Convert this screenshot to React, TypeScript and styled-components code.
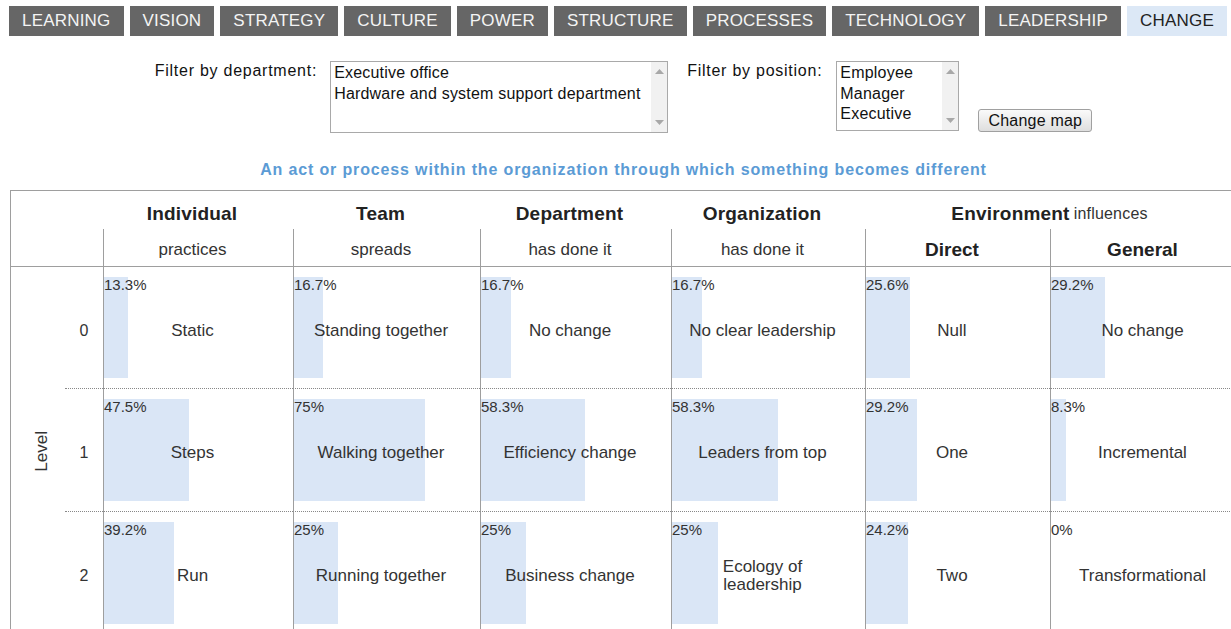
import styled, { createGlobalStyle } from 'styled-components';

const GlobalStyle = createGlobalStyle`
  html, body {
    margin: 0;
    padding: 0;
    overflow: hidden;
    background: #fff;
    font-family: 'Liberation Sans', Arial, sans-serif;
    color: #333;
  }
`;

const tabs = [
  'LEARNING',
  'VISION',
  'STRATEGY',
  'CULTURE',
  'POWER',
  'STRUCTURE',
  'PROCESSES',
  'TECHNOLOGY',
  'LEADERSHIP',
  'CHANGE',
];

// column widths of the map grid, px
const colWidths = [190, 187, 191, 194, 185, 196];

const rows = [
  [
    { pct: 13.3, label: 'Static' },
    { pct: 16.7, label: 'Standing together' },
    { pct: 16.7, label: 'No change' },
    { pct: 16.7, label: 'No clear leadership' },
    { pct: 25.6, label: 'Null' },
    { pct: 29.2, label: 'No change' },
  ],
  [
    { pct: 47.5, label: 'Steps' },
    { pct: 75, label: 'Walking together' },
    { pct: 58.3, label: 'Efficiency change' },
    { pct: 58.3, label: 'Leaders from top' },
    { pct: 29.2, label: 'One' },
    { pct: 8.3, label: 'Incremental' },
  ],
  [
    { pct: 39.2, label: 'Run' },
    { pct: 25, label: 'Running together' },
    { pct: 25, label: 'Business change' },
    { pct: 25, label: 'Ecology of leadership' },
    { pct: 24.2, label: 'Two' },
    { pct: 0, label: 'Transformational' },
  ],
];

const Page = styled.div`
  padding-top: 6px;
`;

const TabBar = styled.nav`
  display: flex;
  gap: 6px;
  padding: 0 9px;
`;

const Tab = styled.div<{ $active?: boolean }>`
  height: 30px;
  line-height: 30px;
  padding: 0 13px;
  font-size: 17px;
  letter-spacing: 0.2px;
  background: ${(p) => (p.$active ? '#dce8f6' : '#666666')};
  color: ${(p) => (p.$active ? '#222' : '#f4f4f4')};
  white-space: nowrap;
`;

const Filters = styled.div`
  display: flex;
  justify-content: center;
  align-items: flex-start;
  margin-top: 25px;
  padding-left: 16px;
`;

const FilterLabel = styled.label<{ $gap: number }>`
  font-size: 16px;
  line-height: 20px;
  letter-spacing: 0.75px;
  color: #111;
  margin-right: ${(p) => p.$gap}px;
  white-space: nowrap;
`;

const ListBox = styled.div<{ $w: number; $h: number; $gap: number }>`
  box-sizing: border-box;
  width: ${(p) => p.$w}px;
  height: ${(p) => p.$h}px;
  border: 1px solid #a9a9a9;
  display: flex;
  background: #fff;
  margin-right: ${(p) => p.$gap}px;
`;

const Options = styled.div`
  flex: 1;
  padding: 1px 3px;
  font-size: 16px;
  line-height: 20.5px;
  letter-spacing: 0.2px;
  color: #111;
  white-space: nowrap;
  overflow: hidden;
`;

const ScrollTrack = styled.div`
  width: 16px;
  background: #f1f1f1;
  display: flex;
  flex-direction: column;
  justify-content: space-between;
  align-items: center;
  padding: 7px 0;
`;

const Button = styled.button`
  align-self: flex-end;
  margin-bottom: 1px;
  box-sizing: border-box;
  width: 114px;
  height: 23px;
  padding: 0;
  border: 1px solid #a0a0a0;
  border-radius: 3px;
  background: linear-gradient(#fafafa, #dedede);
  font-family: 'Liberation Sans', Arial, sans-serif;
  font-size: 16px;
  letter-spacing: 0.2px;
  color: #111;
`;

const Title = styled.h2`
  margin: 27px 0 11px;
  padding-left: 16px;
  text-align: center;
  font-size: 16px;
  line-height: 19px;
  letter-spacing: 0.85px;
  font-weight: bold;
  color: #5b9bd5;
`;

const Grid = styled.div`
  margin-left: 10px;
  display: grid;
  grid-template-columns: 54px 38px ${colWidths.map((w) => `${w}px`).join(' ')};
  grid-template-rows: 38px 38px 122px 123px 123px;
  border-top: 1px solid #9e9e9e;
  border-left: 1px solid #9e9e9e;
`;

const Corner = styled.div<{ $underline?: boolean }>`
  grid-column: 1 / 3;
  box-sizing: border-box;
  border-bottom: ${(p) => (p.$underline ? '1px solid #9e9e9e' : 'none')};
`;

const HeadCell = styled.div<{ $span?: number }>`
  grid-column: span ${(p) => p.$span || 1};
  display: flex;
  justify-content: center;
  align-items: center;
  padding: 8px 12px 0 0;
  font-size: 19px;
  font-weight: bold;
  letter-spacing: 0.2px;
  color: #222;
  white-space: nowrap;
`;

const Influences = styled.span`
  font-size: 16px;
  font-weight: normal;
  color: #333;
  margin-left: 4px;
`;

const SubCell = styled.div<{ $bold?: boolean }>`
  box-sizing: border-box;
  display: flex;
  justify-content: center;
  align-items: center;
  padding: 4px 12px 0 0;
  border-left: 1px solid #9e9e9e;
  border-bottom: 1px solid #9e9e9e;
  font-size: ${(p) => (p.$bold ? '19px' : '17px')};
  font-weight: ${(p) => (p.$bold ? 'bold' : 'normal')};
  color: ${(p) => (p.$bold ? '#222' : '#333')};
  white-space: nowrap;
`;

const LevelCell = styled.div`
  grid-column: 1;
  grid-row: 3 / span 3;
  display: flex;
  justify-content: center;
  align-items: center;
  padding-left: 8px;
`;

const LevelText = styled.span`
  writing-mode: vertical-rl;
  transform: rotate(180deg);
  font-size: 17px;
  color: #333;
`;

const LevelNumber = styled.div`
  grid-column: 2;
  box-sizing: border-box;
  display: flex;
  justify-content: center;
  align-items: center;
  padding-top: 6px;
  border-bottom: 1px dotted #888;
  font-size: 16px;
  color: #333;
`;

const MapCell = styled.div<{ $bar: number }>`
  box-sizing: border-box;
  display: grid;
  grid-template: 1fr / 1fr;
  padding: 10px 0;
  border-left: 1px solid #9e9e9e;
  border-bottom: 1px dotted #888;
  background-image: linear-gradient(#dae6f6, #dae6f6);
  background-repeat: no-repeat;
  background-position: 0 10px;
  background-size: ${(p) => p.$bar}px calc(100% - 20px);
`;

const Percent = styled.span`
  grid-area: 1 / 1;
  align-self: start;
  justify-self: start;
  font-size: 15px;
  line-height: 15px;
  color: #333;
`;

const CellLabel = styled.span`
  grid-area: 1 / 1;
  align-self: center;
  justify-self: center;
  max-width: 150px;
  margin: 6px 12px 0 0;
  text-align: center;
  font-size: 17px;
  line-height: 18px;
  color: #333;
`;

const Arrow = ({ down }: { down?: boolean }) => (
  <svg width="9" height="5" viewBox="0 0 9 5">
    <path d={down ? 'M0 0 L9 0 L4.5 5 Z' : 'M0 5 L9 5 L4.5 0 Z'} fill="#a8a8a8" />
  </svg>
);

const App = () => {
  return (
    <Page>
      <GlobalStyle />
      <TabBar>
        {tabs.map((t) => (
          <Tab key={t} $active={t === 'CHANGE'}>
            {t}
          </Tab>
        ))}
      </TabBar>

      <Filters>
        <FilterLabel $gap={13}>Filter by department:</FilterLabel>
        <ListBox $w={338} $h={72} $gap={19}>
          <Options>
            <div>Executive office</div>
            <div>Hardware and system support department</div>
          </Options>
          <ScrollTrack>
            <Arrow />
            <Arrow down />
          </ScrollTrack>
        </ListBox>
        <FilterLabel $gap={14}>Filter by position:</FilterLabel>
        <ListBox $w={123} $h={70} $gap={19}>
          <Options>
            <div>Employee</div>
            <div>Manager</div>
            <div>Executive</div>
          </Options>
          <ScrollTrack>
            <Arrow />
            <Arrow down />
          </ScrollTrack>
        </ListBox>
        <Button>Change map</Button>
      </Filters>

      <Title>An act or process within the organization through which something becomes different</Title>

      <Grid>
        <Corner />
        <HeadCell>Individual</HeadCell>
        <HeadCell>Team</HeadCell>
        <HeadCell>Department</HeadCell>
        <HeadCell>Organization</HeadCell>
        <HeadCell $span={2}>
          Environment<Influences>influences</Influences>
        </HeadCell>

        <Corner $underline />
        <SubCell>practices</SubCell>
        <SubCell>spreads</SubCell>
        <SubCell>has done it</SubCell>
        <SubCell>has done it</SubCell>
        <SubCell $bold>Direct</SubCell>
        <SubCell $bold>General</SubCell>

        <LevelCell>
          <LevelText>Level</LevelText>
        </LevelCell>
        {rows.map((row, i) => [
          <LevelNumber key={`n${i}`}>{i}</LevelNumber>,
          ...row.map((c, j) => (
            <MapCell key={`c${i}-${j}`} $bar={Math.round((c.pct / 100) * (colWidths[j] - 12))}>
              <Percent>{c.pct}%</Percent>
              <CellLabel>{c.label}</CellLabel>
            </MapCell>
          )),
        ])}
      </Grid>
    </Page>
  );
};

export default App;
